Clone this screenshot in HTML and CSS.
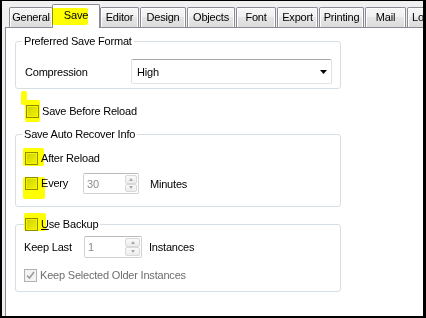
FILE: index.html
```html
<!DOCTYPE html>
<html>
<head>
<meta charset="utf-8">
<link rel="stylesheet" href="styles.css">
</head>
<body>
<div class="frame">
  <div class="tabs">
    <div class="tab">General</div>
    <div class="tab sel"><span class="hl hl-tab"></span>Save</div>
    <div class="tab">Editor</div>
    <div class="tab">Design</div>
    <div class="tab">Objects</div>
    <div class="tab">Font</div>
    <div class="tab">Export</div>
    <div class="tab">Printing</div>
    <div class="tab">Mail</div>
    <div class="tab">Locations</div>
  </div>
  <div class="panel">
    <fieldset class="group g1">
      <legend>Preferred Save Format</legend>
      <div class="row">
        <span class="lbl">Compression</span>
        <div class="combo"><span>High</span><svg class="arrow" width="7" height="4" viewBox="0 0 7 4"><path d="M0 0H7L3.5 4Z" fill="#000"/></svg></div>
      </div>
    </fieldset>

    <div class="check standalone"><span class="box"><span class="hl hl-sbr-a"></span><span class="hl hl-sbr-b"></span></span>Save Before Reload</div>

    <fieldset class="group g2">
      <legend>Save Auto Recover Info</legend>
      <div class="check"><span class="box"><span class="hl hl-ar"></span></span>After Reload</div>
      <div class="row every">
        <div class="check lblcol"><span class="box"><span class="hl hl-ev"></span></span>Every</div>
        <div class="spin s1"><span class="val">30</span><span class="btns"><span class="btn"><i class="up"></i></span><span class="btn"><i class="dn"></i></span></span></div>
        <span class="unit">Minutes</span>
      </div>
    </fieldset>

    <fieldset class="group g3">
      <legend class="chk"><div class="check"><span class="box"><span class="hl hl-ub"></span></span><span><u>U</u>se Backup</span></div></legend>
      <div class="row keep">
        <span class="lbl2">Keep Last</span>
        <div class="spin s2"><span class="val">1</span><span class="btns"><span class="btn"><i class="up"></i></span><span class="btn"><i class="dn"></i></span></span></div>
        <span class="unit u2">Instances</span>
      </div>
      <div class="check disabled"><span class="box dbox"><svg width="9" height="9" viewBox="0 0 9 9"><path d="M1 4.5L3.5 7L8 1" fill="none" stroke="#9a9a9a" stroke-width="1.6"/></svg></span>Keep Selected Older Instances</div>
    </fieldset>
  </div>
</div>
</body>
</html>
```

FILE: styles.css
```css
* { box-sizing: border-box; }
body {
  margin: 0;
  font-family: "Liberation Sans", Arial, sans-serif;
  font-size: 11px;
  letter-spacing: -0.2px;
  color: #000;
}
.frame {
  width: 426px;
  height: 318px;
  border-style: solid;
  border-color: #000;
  border-width: 1px 3px 2px 2px;
  background: #f0f0f0;
  display: flex;
  flex-direction: column;
  overflow: hidden;
}
.tabs {
  height: 26px;
  flex: none;
  display: flex;
  align-items: flex-end;
  padding-left: 7px;
}
.tab {
  height: 20px;
  flex: none;
  border: 1px solid #898c95;
  border-bottom: none;
  border-radius: 2px 2px 0 0;
  background: linear-gradient(#f7f7f7, #efefef 50%, #e5e5e5 50%, #dcdcdc);
  box-shadow: inset 1px 1px 0 #fff, inset -1px 0 0 #fff;
  display: flex;
  align-items: center;
  justify-content: center;
  white-space: nowrap;
  overflow: hidden;
  margin-left: 1px;
  line-height: 13px;
}
.tab:nth-child(1) { width: 44px; margin-left: 0; }
.tab:nth-child(2) { width: 48px; margin-left: -1px; }
.tab:nth-child(3) { width: 39px; margin-left: 0; }
.tab:nth-child(4) { width: 46px; }
.tab:nth-child(5) { width: 48px; }
.tab:nth-child(6) { width: 40px; }
.tab:nth-child(7) { width: 41px; }
.tab:nth-child(8) { width: 45px; }
.tab:nth-child(9) { width: 41px; }
.tab:nth-child(10) { width: 60px; justify-content: flex-start; padding-left: 4px; }
.tab.sel {
  height: 24px;
  margin-bottom: -1px;
  background: #fff;
  box-shadow: none;
  position: relative;
  z-index: 1;
  align-items: flex-start;
  padding-top: 4px;
  overflow: visible;
}
.hl {
  position: absolute;
  background: #ffff00;
  mix-blend-mode: multiply;
  border-radius: 2px;
  z-index: 2;
}
.hl-tab { left: -1px; top: 3px; width: 36px; height: 17px; }
.hl-sbr-a { left: -6px; top: -15px; width: 6px; height: 14px; }
.hl-sbr-b { left: -2px; top: -6px; width: 15px; height: 22px; }
.hl-ar { left: -3px; top: -5px; width: 21px; height: 18px; }
.hl-ev { left: -3px; top: -1px; width: 22px; height: 22px; }
.hl-ub { left: -2px; top: -6px; width: 22px; height: 18px; }

.panel {
  flex: 1;
  margin-left: 3px;
  margin-right: -5px;
  border-top: 1px solid #898c95;
  border-left: 1px solid #898c95;
  background: #fff;
  padding: 7px 0 0 9px;
}
.group {
  width: 326px;
  margin: 0;
  border: 1px solid #d5dfe5;
  border-radius: 3px;
}
.group legend {
  padding: 0 2px;
  margin-left: -3px;
  line-height: 13px;
}
.g1 { padding: 11px 8px 4px 9px; }
.row { display: flex; align-items: center; }
.lbl { width: 106px; }
.combo {
  width: 201px;
  height: 25px;
  border: 1px solid #dfe3e8;
  border-top-color: #a7a7a7;
  border-radius: 2px;
  display: flex;
  align-items: center;
  justify-content: space-between;
  padding: 0 4px 0 5px;
  background: #fff;
}
.arrow { display: block; }

.check {
  display: flex;
  align-items: center;
  height: 13px;
  line-height: 13px;
  white-space: nowrap;
}
.box {
  position: relative;
  width: 13px;
  height: 13px;
  flex: none;
  margin-right: 3px;
  border: 1px solid #8e8f8f;
  background: linear-gradient(135deg, #cdd1d7, #f4f4f4);
  box-shadow: inset 0 0 0 1px #f4f4f4;
}
.standalone { margin: 16px 0 0 11px; }

.g2 { margin-top: 10px; padding: 11px 8px 12px 9px; }
.every { margin-top: 8px; height: 21px; }
.lblcol { width: 58px; }
.spin {
  display: flex;
  align-items: center;
  height: 21px;
  border: 1px solid #d0d2d6;
  border-top-color: #b9bbbf;
  border-radius: 2px;
  background: #fff;
  color: #8d8d8d;
  padding: 1px 1px 1px 3px;
}
.s1 { width: 56px; }
.s2 { width: 58px; height: 22px; }
.val { flex: 1; }
.btns {
  display: flex;
  flex-direction: column;
  width: 12px;
  height: 100%;
  gap: 0;
}
.s2 .btns { width: 15px; }
.btn {
  flex: 1;
  border: 1px solid #d9d9d9;
  border-radius: 2px;
  background: linear-gradient(#fafafa, #ececec);
  display: flex;
  align-items: center;
  justify-content: center;
}
.btn i {
  width: 0;
  height: 0;
  border-left: 2.5px solid transparent;
  border-right: 2.5px solid transparent;
}
.btn i.up { border-bottom: 3px solid #a8a8a8; }
.btn i.dn { border-top: 3px solid #a8a8a8; }
.unit { margin-left: 11px; }
.u2 { margin-left: 7px; }

.g3 { margin-top: 11px; padding: 5px 8px 9px 9px; }
.group legend.chk { padding: 0 2px 0 1px; margin-left: -1px; }
.keep { height: 22px; }
.lbl2 { width: 60px; margin-left: -1px; }
.disabled { margin-top: 11px; margin-left: -1px; color: #6d6d6d; }
.dbox {
  border-color: #b1b1b1;
  background: #f4f4f4;
  box-shadow: none;
  display: flex;
  align-items: center;
  justify-content: center;
}
.dbox svg { display: block; }
```
